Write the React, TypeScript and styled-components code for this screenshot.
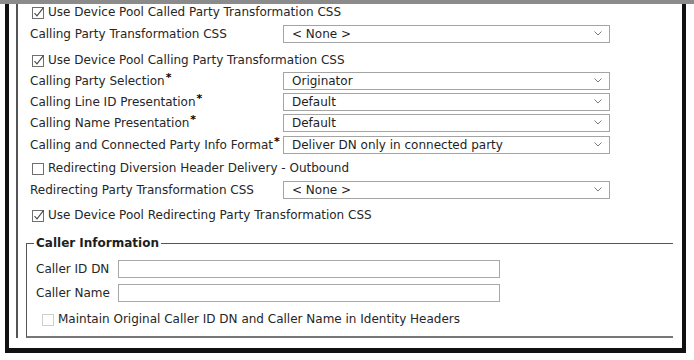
import styled, { createGlobalStyle } from 'styled-components';

const GlobalStyle = createGlobalStyle`
  html, body {
    margin: 0;
    padding: 0;
    background: #ffffff;
  }
  body {
    font-family: "DejaVu Sans", Verdana, sans-serif;
    font-size: 12px;
    color: #262626;
  }
`;

const TopBar = styled.div`
  height: 4px;
  background: #8b8b8b;
`;

const Frame = styled.div`
  box-sizing: border-box;
  margin-left: 5px;
  width: 681px;
  height: 349px;
  border-style: solid;
  border-color: #111;
  border-width: 0 4px 5px 4px;
`;

const Section = styled.div`
  margin-left: 7px;
  border-left: 2px solid #555;
  padding-left: 8px;
  padding-right: 9px;
`;

const Row = styled.div<{ $gap?: number; $h?: number; $indent?: number }>`
  display: flex;
  align-items: center;
  height: ${(p) => p.$h ?? 21}px;
  margin-top: ${(p) => p.$gap ?? 0}px;
  padding-left: ${(p) => p.$indent ?? 4}px;
`;

const CheckRow = styled(Row)`
  gap: 3px;
`;

const Label = styled.div<{ $w?: number }>`
  width: ${(p) => p.$w ?? 253}px;
  flex: none;
  white-space: nowrap;
`;

const Req = styled.span`
  font-weight: bold;
  color: #000;
  font-size: 11px;
  position: relative;
  top: -4px;
  margin-left: 1px;
`;

const SelectBox = styled.div`
  box-sizing: border-box;
  width: 327px;
  height: 18px;
  border: 1px solid #a4a4a4;
  background: #fff;
  display: flex;
  align-items: center;
  justify-content: space-between;
  padding: 0 7px 0 8px;
  color: #1e1e1e;
`;

const TextInput = styled.input`
  box-sizing: border-box;
  width: 382px;
  height: 18px;
  border: 1px solid #a8a8a8;
  background: #fff;
  margin: 0;
  padding: 0 4px;
  font: inherit;
`;

const Group = styled.fieldset`
  margin: 13px 0 0 0;
  padding: 0 0 9px 9px;
  border: none;
  border-top: 1px solid #555;
  border-left: 1px solid #555;
  border-bottom: 2px solid #777;
`;

const Legend = styled.legend`
  font-weight: bold;
  color: #1e1e1e;
  font-size: 12px;
  line-height: 14px;
  padding: 0 2px;
  margin-left: -2px;
`;

function Check({ on, disabled }: { on?: boolean; disabled?: boolean }) {
  return (
    <svg width="13" height="13" viewBox="0 0 13 13">
      <rect
        x="0.5"
        y="1.5"
        width="11"
        height="11"
        fill="#fff"
        stroke={disabled ? '#cfcfcf' : '#6f6f6f'}
      />
      {on && (
        <path d="M2.5 7.2 L5 9.8 L11.6 1.4" fill="none" stroke="#4a4a4a" strokeWidth="1.1" />
      )}
    </svg>
  );
}

function Select({ value }: { value: string }) {
  return (
    <SelectBox>
      <span>{value}</span>
      <svg width="8" height="5" viewBox="0 0 8 5">
        <polyline points="0.5,0.5 4,4 7.5,0.5" fill="none" stroke="#7a7a7a" strokeWidth="1" />
      </svg>
    </SelectBox>
  );
}

export default function App() {
  return (
    <>
      <GlobalStyle />
      <TopBar />
      <Frame>
        <Section>
          <CheckRow $h={16} $indent={6}>
            <Check on />
            <span>Use Device Pool Called Party Transformation CSS</span>
          </CheckRow>
          <Row $gap={3}>
            <Label>Calling Party Transformation CSS</Label>
            <Select value="< None >" />
          </Row>
          <CheckRow $h={16} $gap={8} $indent={6}>
            <Check on />
            <span>Use Device Pool Calling Party Transformation CSS</span>
          </CheckRow>
          <Row $gap={2}>
            <Label>
              Calling Party Selection<Req>*</Req>
            </Label>
            <Select value="Originator" />
          </Row>
          <Row>
            <Label>
              Calling Line ID Presentation<Req>*</Req>
            </Label>
            <Select value="Default" />
          </Row>
          <Row>
            <Label>
              Calling Name Presentation<Req>*</Req>
            </Label>
            <Select value="Default" />
          </Row>
          <Row $gap={1}>
            <Label>
              Calling and Connected Party Info Format<Req>*</Req>
            </Label>
            <Select value="Deliver DN only in connected party" />
          </Row>
          <CheckRow $h={16} $gap={5} $indent={6}>
            <Check />
            <span>Redirecting Diversion Header Delivery - Outbound</span>
          </CheckRow>
          <Row $gap={3}>
            <Label>Redirecting Party Transformation CSS</Label>
            <Select value="< None >" />
          </Row>
          <CheckRow $h={16} $gap={7} $indent={6}>
            <Check on />
            <span>Use Device Pool Redirecting Party Transformation CSS</span>
          </CheckRow>

          <Group>
            <Legend>Caller Information</Legend>
            <Row $gap={8} $indent={0}>
              <Label $w={82}>Caller ID DN</Label>
              <TextInput />
            </Row>
            <Row $gap={3} $indent={0}>
              <Label $w={82}>Caller Name</Label>
              <TextInput />
            </Row>
            <CheckRow $h={16} $gap={8} $indent={6}>
              <Check disabled />
              <span>Maintain Original Caller ID DN and Caller Name in Identity Headers</span>
            </CheckRow>
          </Group>
        </Section>
      </Frame>
    </>
  );
}
